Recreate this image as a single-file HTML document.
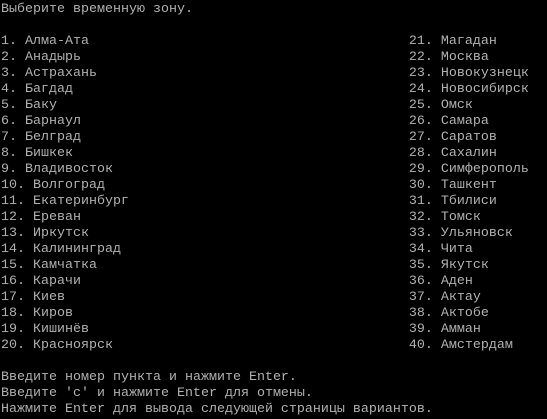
<!DOCTYPE html>
<html><head><meta charset="utf-8"><style>
html,body{margin:0;padding:0;background:#000;width:547px;height:419px;overflow:hidden}
pre{margin:0;padding:2px 0 0 1px;font-family:"Liberation Mono","DejaVu Sans Mono",monospace;font-size:13.33px;line-height:16px;color:#b0b0b0;white-space:pre}
</style></head><body><pre>Выберите временную зону.

1. Алма-Ата                                        21. Магадан
2. Анадырь                                         22. Москва
3. Астрахань                                       23. Новокузнецк
4. Багдад                                          24. Новосибирск
5. Баку                                            25. Омск
6. Барнаул                                         26. Самара
7. Белград                                         27. Саратов
8. Бишкек                                          28. Сахалин
9. Владивосток                                     29. Симферополь
10. Волгоград                                      30. Ташкент
11. Екатеринбург                                   31. Тбилиси
12. Ереван                                         32. Томск
13. Иркутск                                        33. Ульяновск
14. Калининград                                    34. Чита
15. Камчатка                                       35. Якутск
16. Карачи                                         36. Аден
17. Киев                                           37. Актау
18. Киров                                          38. Актобе
19. Кишинёв                                        39. Амман
20. Красноярск                                     40. Амстердам

Введите номер пункта и нажмите Enter.
Введите 'c' и нажмите Enter для отмены.
Нажмите Enter для вывода следующей страницы вариантов.</pre></body></html>
